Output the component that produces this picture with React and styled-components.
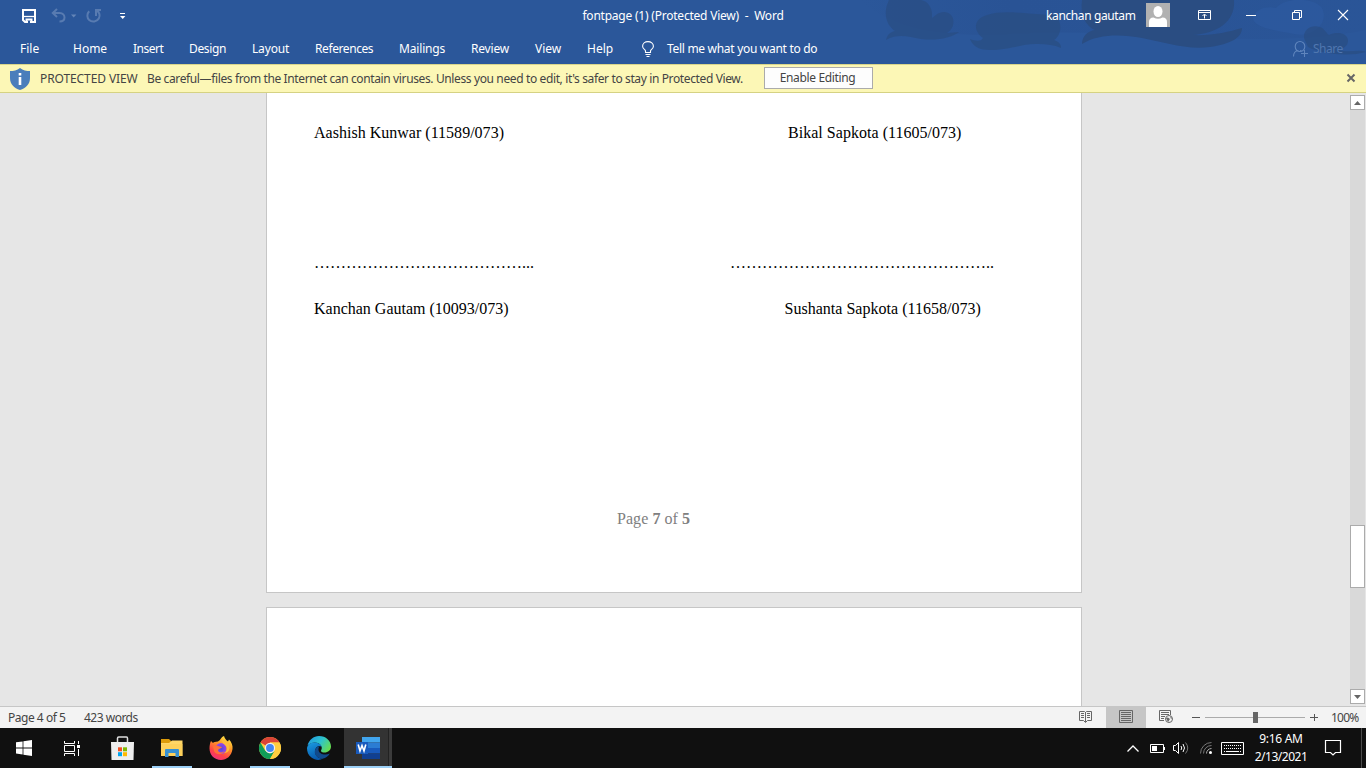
import React from "react";
import styled, { createGlobalStyle } from "styled-components";

const Global = createGlobalStyle`
  * { box-sizing: border-box; }
  body { margin: 0; background: #e6e6e6; overflow: hidden; }
  svg { display: block; flex: none; overflow: visible; }
`;
const Window = styled.div`
  width: 1366px; height: 768px; display: flex; flex-direction: column;
  font: 12px/16px "Noto Sans", "Open Sans", sans-serif; overflow: hidden;
`;
const Header = styled.header`
  position: relative; height: 64px; background: #2b579a; color: #fff; flex: none;
`;
const Artwork = styled.svg` position: absolute; right: 0; top: 0; `;
const TitleBar = styled.div`
  position: relative; height: 32px; display: grid; grid-template-columns: 1fr auto 1fr; align-items: center;
`;
const Label = styled.span`
  white-space: pre; letter-spacing: ${(p) => p.$track || 0}px;
  width: ${(p) => (p.$w ? p.$w + "px" : "auto")}; flex: none;
`;
const QuickAccess = styled.div` display: flex; align-items: center; padding-left: 22px; height: 32px; `;
const WindowControls = styled.div` display: flex; align-items: center; justify-content: flex-end; height: 32px; `;
const Avatar = styled.div` width: 24px; height: 24px; margin: -2px 12px 0 11px; background: #b1b1b1; flex: none; `;
const ControlButton = styled.div` width: 46px; height: 32px; display: flex; align-items: center; justify-content: center; padding-bottom: 2px; `;
const TabRow = styled.nav` position: relative; height: 32px; display: flex; align-items: center; padding: 2px 23px 0 20px; `;
const Tab = styled(Label)` margin-right: ${(p) => p.$gap || 27}px; `;
const Share = styled.div` margin-left: auto; display: flex; align-items: center; gap: 5px; color: #5077b0; `;

const MessageBar = styled.div`
  height: 29px; flex: none; display: flex; align-items: center; padding: 0 11px 0 10px;
  background: #fcf7b6; border-top: 1px solid #d8d58b; border-bottom: 1px solid #d5d283; color: #444;
`;
const BarTitle = styled(Label)` margin-left: 10px; `;
const BarText = styled(Label)` margin-left: 9px; `;
const EnableButton = styled.div`
  width: 109px; height: 22px; margin-left: 21px; display: flex; align-items: center; justify-content: center;
  border: 1px solid #ababab; background: #fdfdfd; color: #444; padding-right: 2px; margin-top: -1px;
`;
const DismissIcon = styled.svg` margin-left: auto; margin-top: -2px; `;

const Workspace = styled.main` height: 613px; flex: none; display: flex; background: #e6e6e6; overflow: hidden; `;
const Canvas = styled.div` flex: 1; padding-left: 266px; display: flex; flex-direction: column; gap: 14px; `;
const Page = styled.section`
  width: 816px; height: ${(p) => p.$h}px; flex: none; background: #fff; border: 1px solid #c6c6c6;
  border-top-width: ${(p) => (p.$cut ? 0 : 1)}px; padding: 31px 0 0 47px;
  font: 16px/18px "Liberation Serif", "Times New Roman", serif; color: #000;
`;
const SignatureRow = styled.div` display: flex; height: 18px; margin-bottom: ${(p) => p.$after}px; `;
const Signature = styled.span` white-space: pre; width: ${(p) => p.$w || "auto"}; letter-spacing: ${(p) => p.$track || 0}px; `;
const PageNumber = styled.div` padding-left: 303px; color: #808080; letter-spacing: .06px; b { font-weight: bold; } `;
const ScrollBar = styled.div` width: 16px; padding: 2px 1px 2px 0; display: flex; flex-direction: column; `;
const ScrollButton = styled.div`
  height: 15px; background: #fff; border: 1px solid #ababab; display: flex; align-items: center; justify-content: center;
`;
const Track = styled.div` flex: 1; background: #d9d9d9; padding-top: 415px; `;
const Thumb = styled.div` height: 63px; background: #fff; border: 1px solid #ababab; `;

const StatusBar = styled.footer`
  height: 22px; flex: none; background: #f3f3f3; border-top: 1px solid #c6c6c6; color: #444;
  display: flex; align-items: center; padding: 0 7px 0 8px;
`;
const StatusText = styled(Label)` margin-right: 18px; `;
const ViewButtons = styled.div` margin-left: auto; display: flex; height: 21px; `;
const ViewButton = styled.div`
  width: 40px; display: flex; align-items: center; justify-content: center; padding-bottom: 2px;
  background: ${(p) => (p.$active ? "#c6c6c6" : "transparent")};
`;
const ZoomControl = styled.div` display: flex; align-items: center; margin-left: 6px; gap: 5px; `;
const ZoomLine = styled.div` width: 100px; height: 11px; display: flex; justify-content: center; align-items: center;
  background: linear-gradient(#ababab, #ababab) 0 5px / 100% 1px no-repeat; `;
const ZoomThumb = styled.div` width: 5px; height: 11px; background: #666; `;
const ZoomValue = styled(Label)` margin-left: 13px; `;

const Taskbar = styled.div` height: 40px; flex: none; display: flex; background: #101010; color: #fff; `;
const TaskItem = styled.div`
  width: ${(p) => p.$w || 49}px; height: 40px; display: flex; align-items: center; justify-content: center; flex: none;
  background: ${(p) => (p.$active ? "linear-gradient(90deg,#333 44px,#222 44px,#222 45px,#3b3b3b 45px)" : "transparent")};
  box-shadow: ${(p) => (p.$active ? "inset 0 -2px #9cd0f7" : "none")};
`;
const RunningItem = styled(TaskItem)`
  background: linear-gradient(#9cd0f7, #9cd0f7) 5px 38px / 40px 2px no-repeat;
`;
const Tray = styled.div` margin-left: auto; display: flex; align-items: center; `;
const TrayIcon = styled.div` margin-right: ${(p) => p.$gap}px; `;
const Clock = styled.div` width: 56px; display: flex; flex-direction: column; align-items: center; line-height: 18px; `;
const DesktopEdge = styled.div` width: 5px; height: 40px; margin-left: 20px; border-left: 1px solid #4b4b4b; `;

const tabs = [
  ["File", 19, 0, 34], ["Home", 34, 0, 26], ["Insert", 30, -0.5, 26], ["Design", 37, -0.33, 26],
  ["Layout", 37, -0.17, 26], ["References", 58, -0.41, 26], ["Mailings", 46, -0.16, 26],
  ["Review", 38, -0.2, 26], ["View", 27, 0, 25], ["Help", 26, 0, 29],
];

const HeaderArt = () => (
  <Artwork width="506" height="64" viewBox="0 0 506 64">
    <defs>
      <linearGradient id="haze" x1="0" x2="1">
        <stop offset="0" stopColor="#274f90" stopOpacity="0" />
        <stop offset=".3" stopColor="#274f90" stopOpacity=".5" />
        <stop offset="1" stopColor="#274f90" stopOpacity=".25" />
      </linearGradient>
    </defs>
    <path d="M0 0H506V30C400 52 260 26 150 34C80 38 30 28 0 0Z" fill="url(#haze)" />
    <path d="M416 8C425-3 454-3 462 8C470 25 450 38 434 34C414 30 394 28 393 18C396 8 407 6 416 8Z" fill="#2d5ca3" opacity=".5" />
    <g fill="#2a4d82">
      <path d="M29 0C24 10 24 23 35 31C30 32 27 35 26 40C39 33 48 37 61 39C77 41 91 38 99 32L87 33C97 27 95 12 84 12C78 12 75 16 72 18C73 8 68 1 61 0Z" opacity=".7" />
      <path d="M127 15C113 19 113 31 123 38C121 42 115 41 110 39C113 47 120 50 130 50C151 50 163 43 178 44C187 44 194 45 201 48C201 44 199 42 194 40C203 34 202 20 194 14C180 17 147 8 127 15Z" opacity=".75" />
      <path d="M222 0C220 14 225 26 235 30C227 31 222 37 222 44C238 34 261 34 282 38C304 42 325 50 350 47C370 44 382 38 382 28C368 32 352 36 332 35C356 34 376 22 374 0Z" />
      <path d="M444 38C443 29 452 24 460 27C465 29 466 33 469 35C477 31 488 33 488 41C488 46 483 49 478 50C490 53 499 49 506 52C489 57 461 54 448 47Z" opacity=".7" />
    </g>
  </Artwork>
);

const SaveIcon = () => (
  <svg width="14" height="14" viewBox="0 0 14 14" fill="none" stroke="#fff" strokeWidth="2">
    <path d="M1 1H13V13H3L1 11Z" /><path d="M1 7.5H13" strokeWidth="1.3" /><path d="M4.5 13V10.5H9.5V13" /><path d="M6 12h2v2H6z" fill="#2b579a" stroke="none" />
  </svg>
);
const QuickIcons = () => (
  <svg width="76" height="16" viewBox="0 0 76 16" fill="none" stroke="#6485b7" strokeWidth="2">
    <path d="M6 1L1.8 5L6 9M2 5H8.5C12 5 13.5 7.5 13.5 9.5C13.5 12 11.500 13.5 8.5 13.5" opacity=".8" />
    <path d="M20 6.5h5.4l-2.7 3z" fill="#6485b7" stroke="none" />
    <path d="M38.2 3.3C35.5 6 36 10 38.2 12C41 14.5 46 13.8 47.8 10.5C49.5 7.5 48.5 4 45.7 2.5M45 8V2H50" opacity=".8" />
    <path d="M69 5.5h5" stroke="#fff" strokeWidth="1" /><path d="M69 8h5.4l-2.7 3z" fill="#fff" stroke="none" />
  </svg>
);
const Undo = styled.div` margin-left: 15px; `;

const StoreIcon = () => (
  <svg width="24" height="24" viewBox="0 0 24 24">
    <path d="M6.500 7V2.200Q6.500 1 7.700 1H15.500Q16.500 1 16.500 2.200V7" fill="none" stroke="#ddd" strokeWidth="1.5" />
    <path d="M0 6H23L22.500 24H.5Z" fill="#eee" />
    <path d="M7 11.3h4v4h-4z" fill="#f25022" /><path d="M12 11.3h4v4h-4z" fill="#7fba00" />
    <path d="M7 16.2h4v4h-4z" fill="#00a4ef" /><path d="M12 16.2h4v4h-4z" fill="#ffb900" />
  </svg>
);
const ExplorerIcon = () => (
  <svg width="22" height="19" viewBox="0 0 22 19">
    <path d="M0 0H8L10 2V6H0Z" fill="#dc9b0a" /><path d="M0 4H8L11 1.5H21.5V17H0Z" fill="#ffd666" /><path d="M0 5H21.5V17H0Z" fill="#fccd55" opacity=".7" />
    <path d="M4 18V11Q4 10 5 10H17Q18 10 18 11V18H14.5V14H7.5V18Z" fill="#3690d2" />
  </svg>
);
const FirefoxIcon = () => (
  <svg width="24" height="24" viewBox="0 0 24 24">
    <defs>
      <linearGradient id="fox" x1=".8" y1="0" x2=".3" y2="1"><stop stopColor="#fff04a" /><stop offset=".4" stopColor="#ff9526" /><stop offset=".75" stopColor="#ff4148" /><stop offset="1" stopColor="#f0317c" /></linearGradient>
      <radialGradient id="globe"><stop stopColor="#5148d8" /><stop offset="1" stopColor="#9845ea" /></radialGradient>
    </defs>
    <path d="M2 5L4 7C5 5.5 6 6 9 5.5C12 4 12 1 15 0C16 3 17 4 19 5.5L20 3.5C22.5 6 24 10 23.5 13C22.5 20 17.5 24 12 24C5.5 24 .5 19 .5 12.5C.5 9.5 1 7 2 5Z" fill="url(#fox)" />
    <circle cx="12" cy="12.5" r="5.5" fill="url(#globe)" />
    <path d="M4 10C7 9 8 10 11 10.5L13 11C12 13 9 12.5 9 14.5C9.5 17 14 17 15.5 15C14.5 19 7 19.5 5 15Z" fill="#ff7139" />
    <path d="M13 3C12 7 16 8 17.5 11C18.5 14 17 16 15 17C20 17 22 12 19.5 8C18 6 15 6 13 3Z" fill="#ffbd3a" />
  </svg>
);
const ChromeIcon = () => (
  <svg width="22" height="22" viewBox="0 0 24 24">
    <circle cx="12" cy="12" r="12" fill="#ffcd40" />
    <path d="M12 12L1.6 6A12 12 0 0 1 22.4 6H12Z" fill="#db4437" />
    <path d="M1.6 6A12 12 0 0 0 12 24L17.2 15L12 18L6.8 15Z" fill="#0f9d58" />
    <path d="M12 6H22.4A12 12 0 0 1 12 24L17.2 15Z" fill="#ffcd40" />
    <circle cx="12" cy="12" r="5.6" fill="#f1f1f1" /><circle cx="12" cy="12" r="4.3" fill="#4285f4" />
  </svg>
);
const EdgeIcon = () => (
  <svg width="24" height="24" viewBox="0 0 24 24">
    <defs>
      <linearGradient id="edgeTop" x1="0" y1=".2" x2="1" y2=".7"><stop stopColor="#229ae0" /><stop offset=".5" stopColor="#2dc3cf" /><stop offset="1" stopColor="#68df4b" /></linearGradient>
      <linearGradient id="edgeSide" x1="0" y1="0" x2=".4" y2="1"><stop stopColor="#1b9de2" /><stop offset="1" stopColor="#0759ae" /></linearGradient>
    </defs>
    <path d="M.5 9.5C2 4 6.5 0 12 0C19 0 24 5 24 10.5C24 14 21 16.5 17.5 16.5C14 16.5 13.5 15 14.5 13.5C16 10 12 6.5 8 6.5C5 6.5 2 8 .5 9.5Z" fill="url(#edgeTop)" />
    <path d="M0 12C1 8 4 6.5 7.5 6.5C12 6.5 14.5 9 14.5 11C12.5 8.5 8 11 8 15.5C8 20 12 23 16 22.5C13 24.500 8 24.500 4.5 21.500C1 19 0 15.500 0 12Z" fill="url(#edgeSide)" />
    <path d="M11 10.5C5 14 8 22.5 15.5 22.7C19 22 21.5 20 22.8 17.5C18 20 12 18 11.500 14C11.4 12.5 11.5 11 13 10.2Z" fill="#114a8b" />
  </svg>
);
const WordIcon = () => (
  <svg width="24" height="22" viewBox="0 0 24 22">
    <path d="M6 0H24V5.5H6Z" fill="#41a5ee" /><path d="M6 5.5H24V11H6Z" fill="#2b7cd3" /><path d="M6 11H24V16.5H6Z" fill="#185abd" /><path d="M6 16.5H24V22H6Z" fill="#103f91" />
    <path d="M0 5H12V17H0Z" fill="#185abd" />
    <path d="M2.2 7.5L4 14L6 8.5L8 14L9.8 7.5" fill="none" stroke="#fff" strokeWidth="1.6" />
  </svg>
);

export default function App() {
  return (
    <Window>
      <Global />
      <Header>
        <HeaderArt />
        <TitleBar>
          <QuickAccess>
            <SaveIcon />
            <Undo><QuickIcons /></Undo>
          </QuickAccess>
          <Label $track={-0.22}>{"fontpage (1) (Protected View)  -  Word"}</Label>
          <WindowControls>
            <Label $track={-0.38} $w={89}>kanchan gautam</Label>
            <Avatar>
              <svg width="24" height="24" viewBox="0 0 24 24" fill="#fff">
                <ellipse cx="12" cy="8.5" rx="4.5" ry="5.5" /><path d="M3 24V19Q3 14.500 7.500 14.500Q12 17 16.500 14.500Q21 14.500 21 19V24Z" />
              </svg>
            </Avatar>
            <ControlButton>
              <svg width="14" height="10" viewBox="0 0 14 10" fill="none" stroke="#fff"><path d="M.5 .5H12.5V9.5H.5ZM.5 2.5H12.5M6.5 8.5V4.5M4.5 6L6.5 4L8.5 6" /></svg>
            </ControlButton>
            <ControlButton><svg width="10" height="10"><path d="M0 5.5H10" stroke="#fff" /></svg></ControlButton>
            <ControlButton>
              <svg width="10" height="10" fill="none" stroke="#fff"><path d="M.5 2.5H7.5V9.5H.5ZM2.5 2.5V.5H9.5V7.5H7.5" /></svg>
            </ControlButton>
            <ControlButton><svg width="10" height="10" stroke="#fff" strokeWidth="1.1"><path d="M0 0L10 10M10 0L0 10" /></svg></ControlButton>
          </WindowControls>
        </TitleBar>
        <TabRow>
          {tabs.map(([name, w, track, gap]) => <Tab key={name} $w={w} $track={track} $gap={gap}>{name}</Tab>)}
          <svg width="12" height="16" viewBox="0 0 12 16" fill="none" stroke="#fff" strokeWidth="1.1">
            <path d="M3.5 11.5V10C3.5 8.5 .6 8 .6 5.2C.6 2.5 3 .6 6 .6S11.4 2.5 11.4 5.2C11.4 8 8.5 8.5 8.5 10V11.5ZM3.5 13.5H8.5M4.5 15.5H7.5" />
          </svg>
          <svg width="13" height="1" />
          <Label $track={-0.3}>Tell me what you want to do</Label>
          <Share>
            <svg width="15" height="16" viewBox="0 0 15 16" fill="none" stroke="#5f85bd" strokeWidth="1.1"><path d="M.5 15.5C.5 12 2.5 9.8 5.5 9.5M7 9.6L9 10M11.800 5.500A4.800 5 0 1 0 2.200 5.500A4.800 5 0 1 0 11.800 5.500M11.500 9V16M8 12.500H15" /></svg>
            <Label $track={-0.5} $w={30}>Share</Label>
          </Share>
        </TabRow>
      </Header>

      <MessageBar>
        <svg width="20" height="22" viewBox="0 0 20 22">
          <path d="M10 0C13 2.5 16.5 3 20 3V10C20 16 16 20 10 22C4 20 0 16 0 10V3C3.5 3 7 2.5 10 0Z" fill="#4a7ebb" />
          <path d="M8.7 5h2.6v2.5H8.7zM8.7 9h2.6v8H8.7z" fill="#fff" />
        </svg>
        <BarTitle $track={-0.1} $w={98}>PROTECTED VIEW</BarTitle>
        <BarText $track={-0.374} $w={596}>Be careful—files from the Internet can contain viruses. Unless you need to edit, it's safer to stay in Protected View.</BarText>
        <EnableButton><Label $track={-0.35}>Enable Editing</Label></EnableButton>
        <DismissIcon width="8" height="8" stroke="#666" strokeWidth="2"><path d="M.5 .5L7.5 7.5M7.5 .5L.5 7.5" /></DismissIcon>
      </MessageBar>

      <Workspace>
        <Canvas>
          <Page $h={500} $cut>
            <SignatureRow $after={112}>
              <Signature $w="474px" $track={0.015}>Aashish Kunwar (11589/073)</Signature>
              <Signature $track={0.03}>Bikal Sapkota (11605/073)</Signature>
            </SignatureRow>
            <SignatureRow $after={28}>
              <Signature $w="416px">{"…".repeat(13) + "..."}</Signature>
              <Signature>{"…".repeat(16) + ".."}</Signature>
            </SignatureRow>
            <SignatureRow $after={192}>
              <Signature $w="470.5px">Kanchan Gautam (10093/073)</Signature>
              <Signature $track={0.02}>Sushanta Sapkota (11658/073)</Signature>
            </SignatureRow>
            <PageNumber>Page <b>7</b> of <b>5</b></PageNumber>
          </Page>
          <Page $h={120} />
        </Canvas>
        <ScrollBar>
          <ScrollButton><svg width="7" height="4"><path d="M0 4L3.5 0L7 4Z" fill="#666" /></svg></ScrollButton>
          <Track><Thumb /></Track>
          <ScrollButton><svg width="7" height="4"><path d="M0 0L3.5 4L7 0Z" fill="#666" /></svg></ScrollButton>
        </ScrollBar>
      </Workspace>

      <StatusBar>
        <StatusText $track={-0.48} $w={58}>Page 4 of 5</StatusText>
        <StatusText $track={-0.5} $w={54}>423 words</StatusText>
        <ViewButtons>
          <ViewButton>
            <svg width="15" height="13" viewBox="0 0 15 13" fill="none" stroke="#666">
              <path d="M5.500 1.500H.5V10.500H4.500L6.500 12.500L8.500 10.500H12.500V1.500H7.500L6.500 2.500ZM6.500 2V12M2 3.500H5M2 5.500H5M2 7.500H5M8 3.500H11M8 5.500H11M8 7.500H11" />
            </svg>
          </ViewButton>
          <ViewButton $active>
            <svg width="14" height="13" viewBox="0 0 14 13" fill="none" stroke="#666"><path d="M.5 .5H13.5V12.5H.5ZM2 2.5H12M2 4.5H12M2 6.5H12M2 8.5H12M2 10.5H12" /></svg>
          </ViewButton>
          <ViewButton>
            <svg width="14" height="13" viewBox="0 0 14 13" fill="none" stroke="#666">
              <path d="M11.5 5V.5H.5V10.5H5M2 2.5H10M2 4.5H10M2 6.5H6M2 8.5H5" />
              <circle cx="10" cy="9" r="3.5" /><path d="M7 8L9 7.5L11 9L9 12ZM11 6L13 8L12 9Z" fill="#666" stroke="none" />
            </svg>
          </ViewButton>
        </ViewButtons>
        <ZoomControl>
          <svg width="8" height="8"><path d="M0 3.5H8" stroke="#555" /></svg>
          <ZoomLine><ZoomThumb /></ZoomLine>
          <svg width="8" height="8"><path d="M0 3.5H8M4.5 0V7" stroke="#555" /></svg>
        </ZoomControl>
        <ZoomValue $track={-0.75} $w={28}>100%</ZoomValue>
      </StatusBar>

      <Taskbar>
        <TaskItem $w={48}>
          <svg width="16" height="16" viewBox="0 0 16 16" fill="#fff"><path d="M0 2.3L6.6 1.4V7.5H0ZM7.4 1.3L16 0V7.5H7.4ZM0 8.4H6.6V14.5L0 13.6ZM7.4 8.4H16V16L7.4 14.7Z" /></svg>
        </TaskItem>
        <TaskItem $w={50}>
          <svg width="18" height="15" viewBox="0 0 18 15" fill="none" stroke="#fff"><path d="M.5 0V2.5H10.5V0M.5 15V12.5H10.5V15M.5 4.5H10.5V10.5H.5ZM14.5 0V3M14.5 8V15" /><path d="M13 4h3v3h-3z" fill="#fff" stroke="none" /></svg>
        </TaskItem>
        <TaskItem><StoreIcon /></TaskItem>
        <RunningItem><ExplorerIcon /></RunningItem>
        <TaskItem><FirefoxIcon /></TaskItem>
        <RunningItem><ChromeIcon /></RunningItem>
        <TaskItem $w={50}><EdgeIcon /></TaskItem>
        <TaskItem $active $w={48}><WordIcon /></TaskItem>
        <Tray>
          <TrayIcon $gap={11}><svg width="12" height="7" fill="none" stroke="#fff" strokeWidth="1.3"><path d="M.5 6.5L6 1L11.5 6.5" /></svg></TrayIcon>
          <TrayIcon $gap={8}><svg width="15" height="9" fill="none" stroke="#fff"><path d="M.5 .5H13.5V8.5H.5Z" /><path d="M2 2h5v5H2zM14 3h1v3h-1z" fill="#fff" stroke="none" /></svg></TrayIcon>
          <TrayIcon $gap={11}>
            <svg width="16" height="14" fill="none" stroke="#fff"><path d="M.5 4.5H2.5L5.5 1.5V12.5L2.5 9.5H.5ZM8 5Q9.5 7 8 9M10 3Q13 7 10 11" /><path d="M12.5 1.5Q17 7 12.5 12.5" stroke="#777" /></svg>
          </TrayIcon>
          <TrayIcon $gap={9}>
            <svg width="12" height="12" fill="none" stroke="#777"><path d="M.5 11.5A11 11 0 0 1 11.5 .5M3.5 11.5A8 8 0 0 1 11.5 3.5" /><path d="M6.5 11.5A5 5 0 0 1 11.5 6.5" stroke="#aaa" /><circle cx="10.5" cy="10.5" r="1.5" fill="#fff" stroke="none" /></svg>
          </TrayIcon>
          <TrayIcon $gap={9}>
            <svg width="23" height="13" fill="none" stroke="#fff"><path d="M.5 .5H22.5V12.5H.5ZM5 9.5H18" /><path d="M3 3.5H20M3 6.5H20" strokeDasharray="1 1" /><path d="M3 9.5H4M19 9.5H20" /></svg>
          </TrayIcon>
          <Clock><Label $track={-0.3}>9:16 AM</Label><Label $track={-0.48}>2/13/2021</Label></Clock>
          <svg width="16" height="1" />
          <svg width="16" height="16" fill="none" stroke="#fff" strokeWidth="1.2"><path d="M.5 .5H15.5V12.5H10.5L8 15L5.5 12.5H.5Z" /></svg>
          <DesktopEdge />
        </Tray>
      </Taskbar>
    </Window>
  );
}
